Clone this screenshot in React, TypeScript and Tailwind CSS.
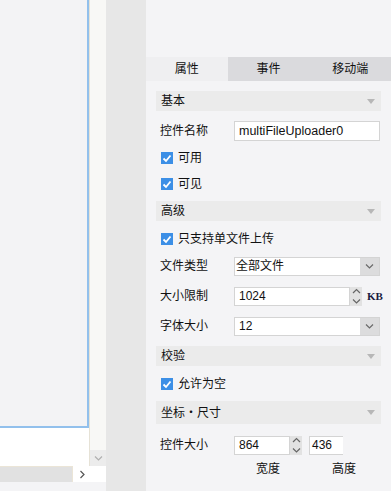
import React from "react";

const FONT = "font-['Liberation_Sans','Noto_Sans_CJK_SC',sans-serif]";

function Chevron({ dir = "down", className = "" }: { dir?: "down" | "up" | "right"; className?: string }) {
  const d =
    dir === "down" ? "M1 1.5 L4.5 5 L8 1.5" : dir === "up" ? "M1 5 L4.5 1.5 L8 5" : "M1.5 1 L5 4.5 L1.5 8";
  return (
    <svg width="9" height={dir === "right" ? 9 : 6.5} viewBox={dir === "right" ? "0 0 9 9" : "0 0 9 6.5"} className={className} fill="none">
      <path d={d} stroke="currentColor" strokeWidth="1.2" />
    </svg>
  );
}

function SectionHeader({ title, className = "" }: { title: string; className?: string }) {
  return (
    <div className={`mx-[10px] flex items-center justify-between bg-[#ebebeb] pl-[5px] pr-[6px] ${className}`}>
      <span className="text-[12px] text-[#111]">{title}</span>
      <svg width="8" height="5" viewBox="0 0 8 5">
        <path d="M0 0 H8 L4 5 Z" fill="#b7b7b7" />
      </svg>
    </div>
  );
}

function Check({ label, className = "" }: { label: string; className?: string }) {
  return (
    <div className={`ml-[15px] flex h-[20px] items-center gap-[5px] ${className}`}>
      <span className="flex h-[12px] w-[12px] items-center justify-center bg-[#3c8fe6]">
        <svg width="10" height="9" viewBox="0 0 10 9" fill="none">
          <path d="M1.5 4.5 L4 7 L8.5 1.5" stroke="white" strokeWidth="1.8" />
        </svg>
      </span>
      <span className="text-[12px] text-[#111]">{label}</span>
    </div>
  );
}

function Row({ label, children, className = "" }: { label: string; children: React.ReactNode; className?: string }) {
  return (
    <div className={`flex h-[20px] items-center ${className}`}>
      <span className="w-[88px] pl-[14px] text-[12px] text-[#111]">{label}</span>
      {children}
    </div>
  );
}

function Select({ value, pad = "pl-[1px]" }: { value: string; pad?: string }) {
  return (
    <div className="flex h-[19px] w-[146px] border border-[#d4d4d4] bg-white">
      <span className={`flex-1 text-[12px] leading-[17px] text-[#111] ${pad}`}>{value}</span>
      <span className="flex w-[19px] items-center justify-center bg-[#dcdcdd] text-[#6a6a6a]">
        <Chevron dir="down" />
      </span>
    </div>
  );
}

function Spinner() {
  return (
    <span className="flex w-[12px] flex-col items-center justify-center gap-[3px] bg-[#e2e2e2] text-[#666]">
      <Chevron dir="up" />
      <Chevron dir="down" />
    </span>
  );
}

export default function App() {
  return (
    <div className={`flex h-[491px] w-[391px] overflow-hidden bg-[#f4f4f6] ${FONT}`}>
      {/* left editor canvas with scrollbars */}
      <div className="flex w-[106px] flex-col">
        <div className="flex h-[466px]">
          <div className="flex w-[89px] flex-col bg-white">
            <div className="h-[428px] border-b-2 border-r-2 border-[#92c0ec] bg-[#f3f3f5]" />
          </div>
          <div className="flex w-[17px] flex-col justify-end border-l border-[#e6e2d6] bg-[#f8f8f6]">
            <div className="flex h-[16px] items-center justify-center bg-[#ececec] text-[#b0b0b0]">
              <Chevron dir="down" />
            </div>
          </div>
        </div>
        <div className="flex h-[16px]">
          <div className="w-[73px] border-r border-t border-[#ebe5d7] bg-[#e1e1e1]" />
          <div className="flex flex-1 items-center bg-white pl-[6px] text-[#555]">
            <Chevron dir="right" />
          </div>
        </div>
        <div className="flex-1 bg-[#f4f4f6]" />
      </div>

      {/* gray gutter */}
      <div className="w-[40px] bg-[#e7e7e7]" />

      {/* property panel */}
      <div className="flex flex-1 flex-col">
        <div className="h-[57px]" />
        <div className="grid h-[24px] grid-cols-3 text-center text-[12px] leading-[24px] text-[#111]">
          <div className="bg-[#efeff1]">属性</div>
          <div className="bg-[#dadadd]">事件</div>
          <div className="bg-[#dadadd]">移动端</div>
        </div>

        <SectionHeader title="基本" className="mt-[10px] h-[20px]" />
        <Row label="控件名称" className="mt-[10px]">
          <div className="h-[20px] w-[146px] border border-[#d4d4d4] bg-white pl-[4px] text-[12.5px] leading-[18px] text-[#111]">
            multiFileUploader0
          </div>
        </Row>
        <Check label="可用" className="mt-[7px]" />
        <Check label="可见" className="mt-[6px]" />

        <SectionHeader title="高级" className="mt-[7px] h-[20px]" />
        <Check label="只支持单文件上传" className="mt-[8px]" />
        <Row label="文件类型" className="mt-[7px]">
          <Select value="全部文件" />
        </Row>
        <Row label="大小限制" className="mt-[10px]">
          <div className="flex h-[19px]">
            <div className="w-[116px] border border-[#d4d4d4] bg-white pl-[4px] text-[12px] leading-[17px] text-[#111]">1024</div>
            <Spinner />
          </div>
          <span className="ml-[5px] font-['Liberation_Serif',serif] text-[11px] font-bold text-[#1a1a40]">KB</span>
        </Row>
        <Row label="字体大小" className="mt-[10px]">
          <Select value="12" pad="pl-[4px]" />
        </Row>

        <SectionHeader title="校验" className="mt-[10px] h-[20px]" />
        <Check label="允许为空" className="mt-[8px]" />

        <SectionHeader title="坐标・尺寸" className="mt-[7px] h-[23px]" />
        <Row label="控件大小" className="mt-[11px]">
          <div className="flex h-[19px]">
            <div className="w-[56px] border border-[#d4d4d4] bg-white pl-[4px] text-[12px] leading-[17px] text-[#111]">864</div>
            <Spinner />
          </div>
          <div className="ml-[7px] h-[19px] w-[34px] border-y border-l border-[#d4d4d4] bg-white pl-[2px] text-[12px] leading-[17px] text-[#111]">
            436
          </div>
        </Row>
        <div className="mt-[6px] flex h-[16px] text-[12px] leading-[16px] text-[#111]">
          <span className="ml-[110px]">宽度</span>
          <span className="ml-[52px]">高度</span>
        </div>
      </div>
    </div>
  );
}
